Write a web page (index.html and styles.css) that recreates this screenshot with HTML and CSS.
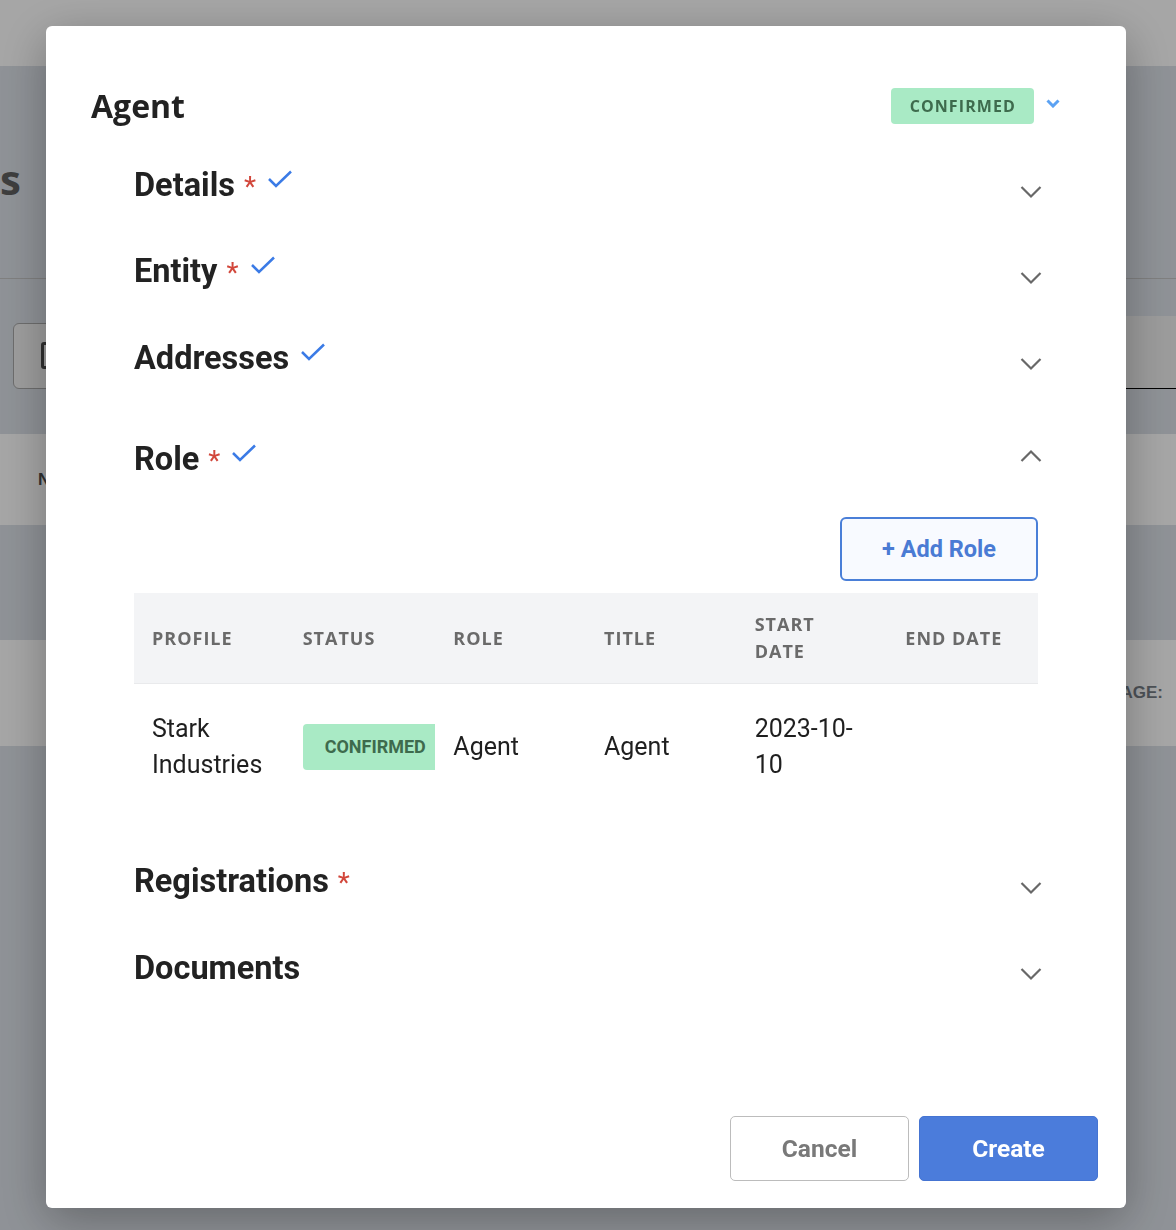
FILE: index.html
```html
<!DOCTYPE html>
<html lang="en">
<head>
    <meta charset="UTF-8">
    <meta name="viewport" content="width=device-width, initial-scale=1.0">
    <title>Agent</title>
    <link rel="stylesheet" href="styles.css">
</head>
<body>
    <!-- page behind the dialog -->
    <div class="page">
        <div class="topbar"></div>
        <div class="page_head">
            <h1 class="page_title"><span>Agents</span></h1>
        </div>
        <div class="toolbar">
            <div class="search"><span class="search_icon"></span></div>
            <div class="filter"></div>
        </div>
        <div class="grid_head"><span>NAME</span></div>
        <div class="grid_empty"></div>
        <div class="pager"><span>ROWS PER PAGE:</span></div>
    </div>

    <div class="overlay">
        <div class="modal">
            <div class="modal_body">
                <div class="modal_head">
                    <h2 class="modal_title">Agent</h2>
                    <div class="status">
                        <span class="badge">CONFIRMED</span>
                        <svg class="status_arrow" width="14" height="9" viewBox="0 0 14 9"><path d="M1.5 1.5l5.5 5.5 5.5-5.5" fill="none" stroke="#5ba2f3" stroke-width="3"/></svg>
                    </div>
                </div>

                <div class="sections">
                    <div class="section">
                        <div class="section_head">
                            <h3 class="section_title">Details<span class="req">*</span><svg class="check" width="24" height="18" viewBox="0 0 24 18"><path d="M1 9l7 7L23 1.5" fill="none" stroke="#3b7be6" stroke-width="2.5"/></svg></h3>
                            <svg class="chevron" width="24" height="14" viewBox="0 0 24 14"><path d="M2.5 2l9.5 9.5L21.5 2" fill="none" stroke="#686868" stroke-width="2.2"/></svg>
                        </div>
                    </div>
                    <div class="section">
                        <div class="section_head">
                            <h3 class="section_title">Entity<span class="req">*</span><svg class="check" width="24" height="18" viewBox="0 0 24 18"><path d="M1 9l7 7L23 1.5" fill="none" stroke="#3b7be6" stroke-width="2.5"/></svg></h3>
                            <svg class="chevron" width="24" height="14" viewBox="0 0 24 14"><path d="M2.5 2l9.5 9.5L21.5 2" fill="none" stroke="#686868" stroke-width="2.2"/></svg>
                        </div>
                    </div>
                    <div class="section">
                        <div class="section_head">
                            <h3 class="section_title">Addresses<svg class="check" width="24" height="18" viewBox="0 0 24 18"><path d="M1 9l7 7L23 1.5" fill="none" stroke="#3b7be6" stroke-width="2.5"/></svg></h3>
                            <svg class="chevron" width="24" height="14" viewBox="0 0 24 14"><path d="M2.5 2l9.5 9.5L21.5 2" fill="none" stroke="#686868" stroke-width="2.2"/></svg>
                        </div>
                    </div>

                    <div class="section open">
                        <div class="section_head">
                            <h3 class="section_title">Role<span class="req">*</span><svg class="check" width="24" height="18" viewBox="0 0 24 18"><path d="M1 9l7 7L23 1.5" fill="none" stroke="#3b7be6" stroke-width="2.5"/></svg></h3>
                            <svg class="chevron up" width="24" height="14" viewBox="0 0 24 14"><path d="M2.5 12l9.5-9.5 9.5 9.5" fill="none" stroke="#686868" stroke-width="2.2"/></svg>
                        </div>
                        <div class="section_body">
                            <div class="actions">
                                <button class="btn_add">+ Add Role</button>
                            </div>
                            <div class="table">
                                <div class="tr th">
                                    <div class="cell">PROFILE</div>
                                    <div class="cell">STATUS</div>
                                    <div class="cell">ROLE</div>
                                    <div class="cell">TITLE</div>
                                    <div class="cell">START DATE</div>
                                    <div class="cell">END DATE</div>
                                </div>
                                <div class="tr">
                                    <div class="cell">Stark Industries</div>
                                    <div class="cell"><span class="badge small">CONFIRMED</span></div>
                                    <div class="cell">Agent</div>
                                    <div class="cell">Agent</div>
                                    <div class="cell">2023-10-10</div>
                                    <div class="cell"></div>
                                </div>
                            </div>
                        </div>
                    </div>

                    <div class="section">
                        <div class="section_head">
                            <h3 class="section_title">Registrations<span class="req">*</span></h3>
                            <svg class="chevron" width="24" height="14" viewBox="0 0 24 14"><path d="M2.5 2l9.5 9.5L21.5 2" fill="none" stroke="#686868" stroke-width="2.2"/></svg>
                        </div>
                    </div>
                    <div class="section">
                        <div class="section_head">
                            <h3 class="section_title">Documents</h3>
                            <svg class="chevron" width="24" height="14" viewBox="0 0 24 14"><path d="M2.5 2l9.5 9.5L21.5 2" fill="none" stroke="#686868" stroke-width="2.2"/></svg>
                        </div>
                    </div>
                </div>
            </div>

            <div class="modal_foot">
                <button class="btn cancel">Cancel</button>
                <button class="btn create">Create</button>
            </div>
        </div>
    </div>
</body>
</html>
```

FILE: styles.css
```css
* { margin: 0; padding: 0; box-sizing: border-box;}
html, body { height: 100%;}
body { background: #dce1e8; font-family: Roboto, "Liberation Sans", sans-serif; color: #222; overflow: hidden;}

/* page behind */
.topbar { height: 66px; background: #fff;}
.page_head { height: 213px; border-bottom: 1px solid #c4c4c4; padding-top: 92px;}
.page_title { width: 21px; display: flex; justify-content: flex-end; overflow: hidden; font-family: "Open Sans", sans-serif; font-size: 42px; line-height: 42px; font-weight: 700; color: #606060; white-space: nowrap;}
.toolbar { height: 155px; display: flex; align-items: flex-end; padding-bottom: 45px;}
.search { width: 300px; height: 66px; margin-left: 13px; border: 1px solid #a8a8a8; border-radius: 6px; background: #f2f2f2; padding: 18px 0 0 27px;}
.search_icon { display: block; width: 18px; height: 27px; border: 3px solid #4a4a4a; border-radius: 3px;}
.filter { width: 420px; height: 73px; margin-left: auto; background: #f0f0f0; border-bottom: 1px solid #000;}
.grid_head { height: 91px; background: #fff; padding-left: 38px; display: flex; align-items: center; font-family: "Liberation Sans", sans-serif; font-weight: 700; font-size: 17px; color: #4d4d4d;}
.grid_empty { height: 115px;}
.pager { height: 106px; background: #fff; display: flex; align-items: center; justify-content: flex-end; padding-right: 13px; font-family: "Liberation Sans", sans-serif; font-weight: 700; font-size: 17px; color: #767d86;}

/* dialog */
.overlay { position: fixed; inset: 0; background: rgba(0,0,0,0.35); display: flex; justify-content: center; align-items: flex-start; padding: 26px 4px 0 0;}
.modal { width: 1080px; height: 1182px; background: #fff; border-radius: 6px; display: flex; flex-direction: column; box-shadow: 0 12px 48px rgba(0,0,0,0.3);}
.modal_body { flex: 1;}
.modal_head { display: flex; align-items: center; justify-content: space-between; height: 98px; padding: 62px 66px 0 45px;}
.modal_title { font-family: "Open Sans", sans-serif; font-size: 32px; line-height: 36px; font-weight: 700; color: #222;}
.status { display: flex; align-items: center; gap: 12px;}
.status_arrow { margin-top: -6px;}
.badge { display: inline-block; height: 36px; line-height: 36px; padding: 0 18px 0 19px; border-radius: 4px; background: #a9eac5; color: #3e6b4d; font-family: "Open Sans", sans-serif; font-size: 16px; font-weight: 700; letter-spacing: 1.1px;}
.badge.small { height: 46px; line-height: 46px; padding: 0 22px; font-family: Roboto, sans-serif; font-size: 18px; letter-spacing: 0; white-space: nowrap;}

.sections { padding: 19px 88px 0;}
.section_head { height: 86px; display: flex; align-items: center; justify-content: space-between;}
.section_title { font-size: 32.5px; line-height: 32px; font-weight: 700; color: #222; white-space: nowrap;}
.req { color: #d2473b; font-weight: 400; font-size: 28px; margin-left: 9px;}
.check { margin-left: 12px; vertical-align: 8px;}
.chevron { margin-right: -5px; margin-top: 12px;}
.chevron.up { margin-top: -8px;}

.section.open { margin-top: 16px;}
.section_body { padding: 14px 0 31px;}
.actions { display: flex; justify-content: flex-end; margin-bottom: 12px;}
.btn_add { width: 198px; height: 64px; border: 2px solid #4a7fd8; border-radius: 6px; background: #f8faff; color: #4a7bd4; font-family: Roboto, sans-serif; font-size: 23.5px; font-weight: 700;}

.table { width: 100%;}
.tr { display: grid; grid-template-columns: repeat(6, 1fr);}
.th { background: #f3f4f6; height: 91px; border-bottom: 1px solid #e9eaec;}
.th .cell { display: flex; align-items: center; font-family: "Open Sans", sans-serif; font-size: 18px; line-height: 27px; font-weight: 700; letter-spacing: 1px; color: #6a6a6a;}
.cell { padding: 0 18px; overflow: hidden;}
.tr:not(.th) .cell { padding-top: 27px; padding-bottom: 25px; display: flex; align-items: center; font-size: 25px; line-height: 36px; color: #1f1f1f;}
.tr:not(.th) .cell:nth-child(2) { padding-right: 0;}

.modal_foot { display: flex; justify-content: flex-end; gap: 10px; padding: 0 28px 27px;}
.btn { width: 179px; height: 65px; border-radius: 5px; font-family: Roboto, sans-serif; font-size: 24.5px; font-weight: 700;}
.btn.cancel { background: #fff; border: 1px solid #bcbcbc; color: #797979;}
.btn.create { background: #4b7cdb; border: 1px solid #4574d2; color: #fff;}
```
